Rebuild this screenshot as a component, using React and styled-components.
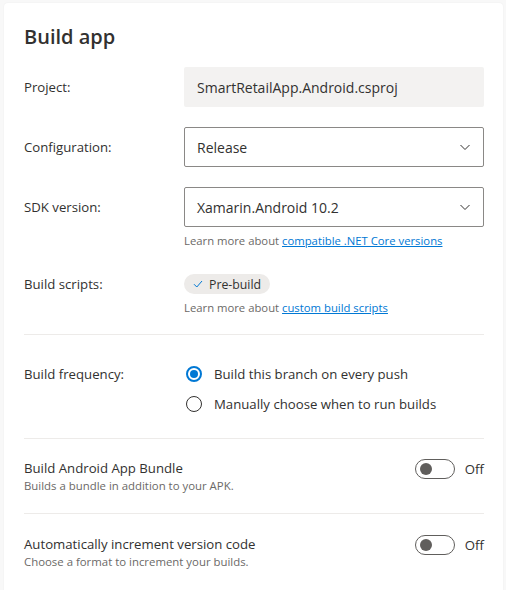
import React from 'react';
import styled, { createGlobalStyle } from 'styled-components';

const GlobalStyle = createGlobalStyle`
  html, body {
    margin: 0;
    padding: 0;
    background: #f8f8f8;
  }
  body {
    font-family: "Segoe UI", "Open Sans", "Noto Sans", sans-serif;
    color: #323130;
    -webkit-font-smoothing: antialiased;
  }
`;

const Page = styled.div`
  padding: 3px 3px 0 4px;
  height: 590px;
  box-sizing: border-box;
  overflow: hidden;
`;

const Card = styled.div`
  background: #fff;
  border-radius: 4px;
  box-shadow: 0 0 2px rgba(0, 0, 0, 0.06);
  padding: 20px 19px 40px 20px;
  min-height: 620px;
  box-sizing: border-box;
`;

const Title = styled.h1`
  margin: 0 0 16px;
  font-size: 20px;
  font-weight: 600;
  line-height: 28px;
  color: #323130;
`;

const Row = styled.div`
  display: grid;
  grid-template-columns: 160px 1fr;
  align-items: start;
  margin-bottom: ${p => p.$mb ?? 20}px;
`;

const Label = styled.div`
  font-size: 13.2px;
  line-height: 20px;
  padding-top: ${p => p.$pt ?? 10}px;
  color: #323130;
`;

const ReadOnly = styled.div`
  height: 40px;
  background: #f3f2f1;
  border-radius: 2px;
  display: flex;
  align-items: center;
  padding: 0 13px;
  font-size: 14px;
  color: #323130;
`;

const Select = styled.div`
  height: 40px;
  box-sizing: border-box;
  border: 1px solid #8a8886;
  border-radius: 2px;
  display: flex;
  align-items: center;
  justify-content: space-between;
  padding: 0 12px 0 12px;
  font-size: 14px;
  color: #323130;
`;

const Field = styled.div`
  display: flex;
  flex-direction: column;
  align-items: flex-start;
  & > ${Select} {
    align-self: stretch;
  }
`;

const Help = styled.div`
  font-size: 11.3px;
  line-height: 16px;
  color: #6b6967;
  margin-top: ${p => p.$mt ?? 6}px;
  a {
    color: #0078d4;
    text-decoration: underline;
  }
`;

const Chip = styled.span`
  display: inline-flex;
  align-items: center;
  gap: 6px;
  height: 20px;
  padding: 0 9px 0 9px;
  border-radius: 10px;
  background: #edebe9;
  font-size: 12.3px;
  color: #323130;
`;

const Divider = styled.hr`
  border: 0;
  border-top: 1px solid #edebe9;
  margin: ${p => p.$m || '0'};
`;

const Radios = styled.div`
  display: flex;
  flex-direction: column;
  gap: 10px;
`;

const RadioItem = styled.label`
  display: flex;
  align-items: center;
  gap: 12px;
  font-size: 13.2px;
  line-height: 20px;
  color: #323130;
  padding-left: 2px;
`;

const RadioDot = styled.span`
  width: 16px;
  height: 16px;
  box-sizing: border-box;
  border-radius: 50%;
  border: ${p => (p.$on ? '2px solid #0078d4' : '1px solid #323130')};
  display: flex;
  align-items: center;
  justify-content: center;
  &::after {
    content: '';
    display: ${p => (p.$on ? 'block' : 'none')};
    width: 8px;
    height: 8px;
    border-radius: 50%;
    background: #0078d4;
  }
`;

const ToggleRow = styled.div`
  display: flex;
  justify-content: space-between;
  align-items: flex-start;
`;

const ToggleText = styled.div`
  display: flex;
  flex-direction: column;
`;

const ToggleTitle = styled.div`
  font-size: 13.2px;
  line-height: 20px;
  color: #323130;
`;

const ToggleSub = styled.div`
  font-size: 11.4px;
  line-height: 16px;
  color: #6b6967;
`;

const ToggleWrap = styled.div`
  display: flex;
  align-items: center;
  gap: 10px;
  font-size: 13.2px;
  color: #323130;
  line-height: 20px;
  padding-top: 1px;
`;

const Switch = styled.span`
  width: 40px;
  height: 20px;
  box-sizing: border-box;
  border: 1px solid #605e5c;
  border-radius: 10px;
  display: flex;
  align-items: center;
  padding-left: 4px;
  &::after {
    content: '';
    width: 12px;
    height: 12px;
    border-radius: 50%;
    background: #605e5c;
  }
`;

const Chevron = () => (
  <svg width="12" height="12" viewBox="0 0 12 12">
    <path d="M1.5 4 L6 8.5 L10.5 4" fill="none" stroke="#323130" strokeWidth="1" />
  </svg>
);

const Check = () => (
  <svg width="10" height="10" viewBox="0 0 10 10">
    <path d="M1 5.2 L3.8 8 L9 2" fill="none" stroke="#0078d4" strokeWidth="1" />
  </svg>
);

const Toggle = ({ title, sub }) => (
  <ToggleRow>
    <ToggleText>
      <ToggleTitle>{title}</ToggleTitle>
      <ToggleSub>{sub}</ToggleSub>
    </ToggleText>
    <ToggleWrap>
      <Switch />
      <span>Off</span>
    </ToggleWrap>
  </ToggleRow>
);

export default function App() {
  return (
    <Page>
      <GlobalStyle />
      <Card>
        <Title>Build app</Title>
        <Row>
          <Label>Project:</Label>
          <ReadOnly>SmartRetailApp.Android.csproj</ReadOnly>
        </Row>
        <Row>
          <Label>Configuration:</Label>
          <Select>
            <span>Release</span>
            <Chevron />
          </Select>
        </Row>
        <Row $mb={25}>
          <Label>SDK version:</Label>
          <Field>
            <Select>
              <span>Xamarin.Android 10.2</span>
              <Chevron />
            </Select>
            <Help $mt={6}>
              Learn more about <a href="#">compatible .NET Core versions</a>
            </Help>
          </Field>
        </Row>
        <Row $mb={0}>
          <Label $pt={0}>Build scripts:</Label>
          <Field>
            <Chip>
              <Check />
              Pre-build
            </Chip>
            <Help $mt={6}>
              Learn more about <a href="#">custom build scripts</a>
            </Help>
          </Field>
        </Row>
        <Divider $m="18px 0 29px" />
        <Row $mb={0}>
          <Label $pt={0}>Build frequency:</Label>
          <Radios>
            <RadioItem>
              <RadioDot $on />
              Build this branch on every push
            </RadioItem>
            <RadioItem>
              <RadioDot />
              Manually choose when to run builds
            </RadioItem>
          </Radios>
        </Row>
        <Divider $m="24px 0 19px" />
        <Toggle title="Build Android App Bundle" sub="Builds a bundle in addition to your APK." />
        <Divider $m="19px 0 20px" />
        <Toggle title="Automatically increment version code" sub="Choose a format to increment your builds." />
      </Card>
    </Page>
  );
}
